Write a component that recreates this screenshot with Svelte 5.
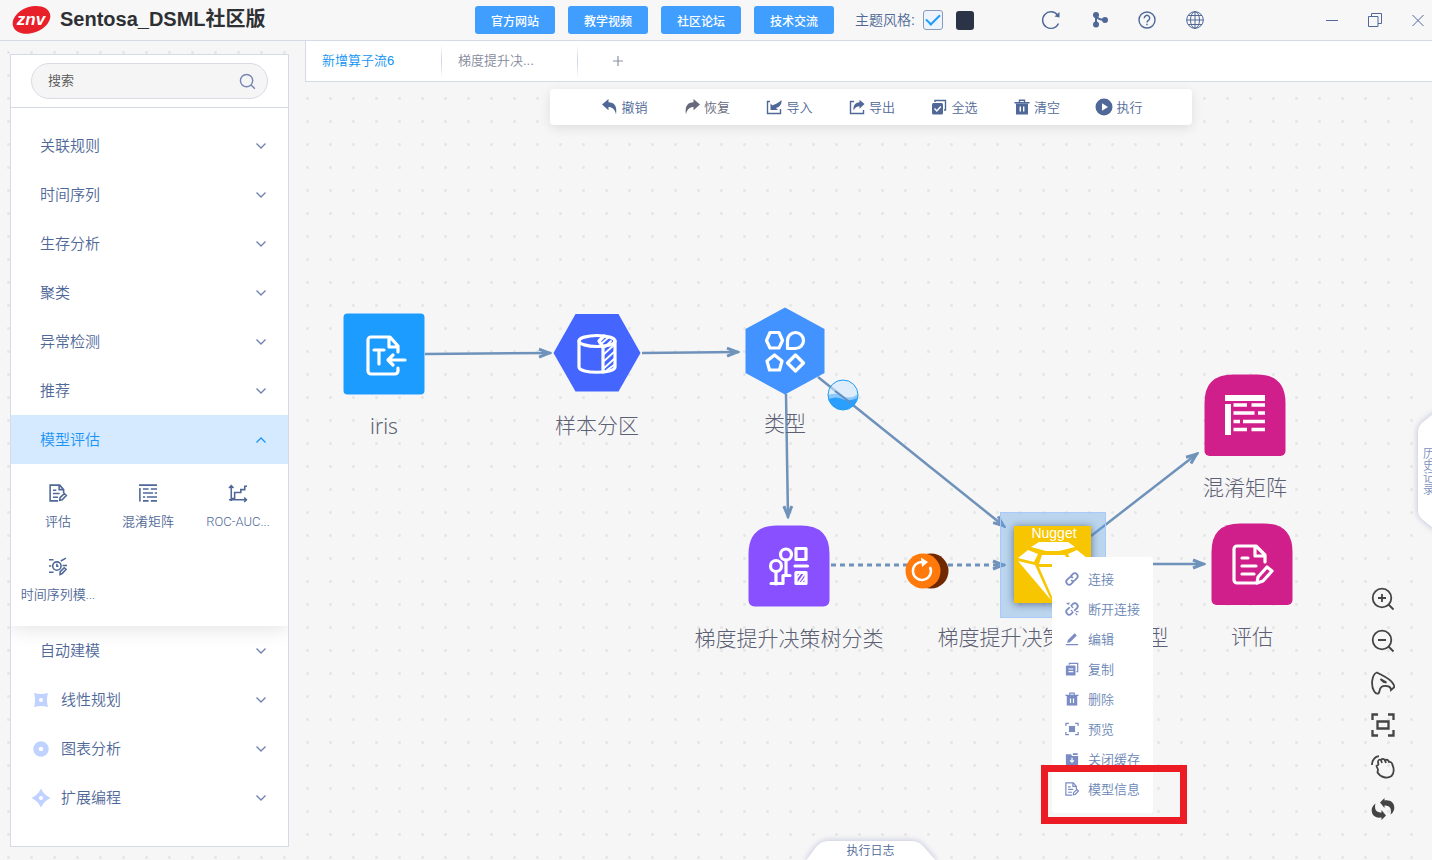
<script lang="ts">
  const links = ["官方网站", "教学视频", "社区论坛", "技术交流"];
  const tools = [
    { id: "undo", label: "撤销" },
    { id: "redo", label: "恢复" },
    { id: "import", label: "导入" },
    { id: "export", label: "导出" },
    { id: "all", label: "全选" },
    { id: "trash", label: "清空" },
    { id: "run", label: "执行" },
  ];
  const groups = [
    { label: "关联规则" },
    { label: "时间序列" },
    { label: "生存分析" },
    { label: "聚类" },
    { label: "异常检测" },
    { label: "推荐" },
    { label: "模型评估" },
    { label: "自动建模" },
    { label: "线性规划", icon: "square" },
    { label: "图表分析", icon: "ring" },
    { label: "扩展编程", icon: "star" },
  ];
  const operators = [
    { id: "doc", label: "评估" },
    { id: "matrix", label: "混淆矩阵" },
    { id: "roc", label: "ROC-AUC..." },
    { id: "time", label: "时间序列模..." },
  ];
  const menu = [
    { id: "link", label: "连接" },
    { id: "unlink", label: "断开连接" },
    { id: "edit", label: "编辑" },
    { id: "copy", label: "复制" },
    { id: "trash", label: "删除" },
    { id: "preview", label: "预览" },
    { id: "cache", label: "关闭缓存" },
    { id: "doc", label: "模型信息" },
  ];

  // x, y = centre of the tile on the canvas
  const nodes = [
    { id: "source", label: "iris", x: 79, y: 272 },
    { id: "sample", label: "样本分区", x: 292, y: 271 },
    { id: "type", label: "类型", x: 480, y: 269 },
    { id: "gbdt", label: "梯度提升决策树分类", x: 484, y: 484 },
    { id: "nugget", label: "梯度提升决策树分类模型", x: 748, y: 483 },
    { id: "matrix", label: "混淆矩阵", x: 940, y: 333 },
    { id: "eval", label: "评估", x: 947, y: 482 },
  ];
  const edges = [
    { d: "M120 272L246 271" },
    { d: "M337 271L434 270" },
    { d: "M481 312L483 436" },
    { d: "M513 295L700 445" },
    { d: "M526 483L700 483", dashed: true },
    { d: "M786 454L893 371" },
    { d: "M801 482L900 482" },
  ];

  let open = $state("模型评估");
  let light = $state(true);
</script>

{#snippet icon(id: string)}
  <svg class="ico" viewBox="0 0 16 16" aria-hidden="true">
    {#if id === "undo"}
      <path class="f" d="M0 5.500 6.500 0v3.300C12 3.300 15.500 7 14 15.500 13 10 10 8 6.500 8v3.300z" />
    {:else if id === "redo"}
      <path class="f" d="M16 5.500 9.500 0v3.300C4 3.300.5 7 2 15.500 3 10 6 8 9.500 8v3.300z" />
    {:else if id === "import"}
      <path class="s" d="M4 2.500H1.500v12h13V10M1.500 9.500V2.500" />
      <path class="f" d="M4.500 11V4.500l2 2C8 5.500 12 4.500 15.500 1c.5 4.500-2 7-5.500 8l2 2z" />
    {:else if id === "export"}
      <path class="s" d="M5 2.500H1.500v12h13V11" />
      <path class="f" d="M15.500 5 10.500.8v2.500C6 3.500 4 7 4.500 11.500 6 8.500 8 7.300 10.500 7.300v2.500z" />
    {:else if id === "all"}
      <path class="s" d="M4 3V1.500h10.500V11H13" />
      <rect class="f" x="1" y="4" width="11" height="11.500" rx="1.500" />
      <path class="cut" d="m3.500 9.500 2.300 2.500 4-4.500" />
    {:else if id === "trash"}
      <path class="s" d="M5.500 3V1.200h5V3M.5 3.800h15" />
      <path class="f" d="M2 4.500h12v11H2z" />
      <path class="cut" d="M6.300 7.500v5M9.700 7.500v5" />
    {:else if id === "run"}
      <circle class="f" cx="8" cy="8" r="8.500" />
      <path fill="#fff" d="m6 4.300 6 3.700-6 3.700z" />
    {:else if id === "doc"}
      <path class="s" d="M8 15H1V1h8.500L13 5v3M9 1.500V5h3.700M3.500 5.500h3M3.500 8.500h6M3.500 11.700h4.500" />
      <path class="s" d="m9.500 14.500.3-2.300 3.800-3.700 1.800 1.700-3.700 3.900z" />
    {:else if id === "matrix"}
      <path class="s" d="M0 1h16M.8 3.500v12M3.500 4.500h5M10.500 4.500h5.500M3.500 8h9M14 8h2M3.500 11.500h2M7 11.500h9M3.500 15h5M10.500 15h5.500" />
    {:else if id === "roc"}
      <path class="s" d="M2 15V1.500M0 3.500l2-2 2 2M0 14h15.500M13.500 12l2 2-2 2M2 13h3V7.500h5.500V5h3.500V2h2" />
    {:else if id === "time"}
      <circle class="s" cx="7" cy="8" r="3.700" />
      <path class="s" d="M7 6v2.200h1.500M0 2.500h4M0 8h2M0 13.500h4M10.500 3.500l4.500-2.500M12 7.500h4M9.800 15.500l.2-2.500 3.500-3.500 1.700 1.400-3.500 3.800z" />
    {:else if id === "link" || id === "unlink"}
      <g transform="rotate(-45 8 8)" class="s thick">
        <path d="M7 11.300H3.500a3.300 3.300 0 0 1 0-6.600H7a3 3 0 0 1 2.500 3.300" />
        <path d="M9 4.700h3.500a3.300 3.300 0 0 1 0 6.600H9A3 3 0 0 1 6.500 8" />
      </g>
      {#if id === "unlink"}
        <path stroke="#fff" stroke-width="1.500" d="m5 4 6 8" />
        <path class="s" d="M2 1l2 2M4.500.5v2M14 15l-2-2M12.500 11h3" />
      {/if}
    {:else if id === "edit"}
      <path class="f" d="m2.500 12.500.8-3.300L11 1.500l2.500 2.500-7.700 7.700zM1 13.700h14v1.500H1z" />
    {:else if id === "copy"}
      <path class="s" d="M5 3V1.500h9.500V11H13" />
      <rect class="f" x="1" y="4" width="11" height="11.500" rx="1" />
      <path class="cut" d="M4 8h5.500M4 11h5.500" />
    {:else if id === "preview"}
      <path class="s" d="M1 4.500V1.500h3.500M11.500 1.500H15v3M15 11.500v3h-3.500M4.500 14.500H1v-3" />
      <rect class="f" x="4.500" y="4.500" width="7" height="7" />
    {:else if id === "cache"}
      <path class="f" d="M1 2.500h6l1 2h7V15H1zM9 1.500h5.500v2H9z" />
      <path class="cut" d="M8 6.500v5M5.800 9.500 8 11.700l2.200-2.200" />
    {:else if id === "square"}
      <path fill="#c0d2ff" fill-rule="evenodd" d="M1 1q7 2 14 0-2 7 0 14-7-2-14 0 2-7 0-14zM8 6a2 2 0 1 0 0 4 2 2 0 0 0 0-4z" />
    {:else if id === "ring"}
      <circle cx="8" cy="8" r="5" fill="none" stroke="#c0d2ff" stroke-width="5.500" />
    {:else if id === "star"}
      <path fill="#c0d2ff" fill-rule="evenodd" d="M8-1.500q3 6.500 9.500 9.500-6.500 3-9.500 9.500-3-6.500-9.500-9.500 6.500-3 9.500-9.500zM8 6a2 2 0 1 0 0 4 2 2 0 0 0 0-4z" />
    {/if}
  </svg>
{/snippet}

{#snippet tile(id: string)}
  <svg class="tile" viewBox="-55 -55 110 110" aria-hidden="true">
    {#if id === "source"}
      <rect x="-40.500" y="-40.500" width="81" height="81" rx="4" fill="#1c9cff" />
      <g class="w">
        <path d="M14-2v-6L6-17h-19a3 3 0 0 0-3 3v31a3 3 0 0 0 3 3h24a3 3 0 0 0 3-3v-3M5-17v10h9" />
        <path d="M-10-4H0M-5-4v14M21 6H4M9 1 4 6l5 5" />
      </g>
    {:else if id === "sample"}
      <path d="M-43.500 0-21.500-39h43L43.500 0l-22 38.500h-43z" fill="#4466ff" />
      <g class="w">
        <path d="M-18-12v26c0 7 36 7 36 0v-26" />
        <ellipse cx="0" cy="-12" rx="18" ry="5.500" />
        <path d="M2-12 6-6v25M2-12l5-5" />
        <path stroke-width="1.800" d="m6 2 11-10M6 9 17-1M6 16 17 6M10 17l7-5M8-6l6-6M4-9l8-7" />
      </g>
    {:else if id === "type"}
      <path d="M0-43.500 39.500-22v44L0 43.500-39.500 22v-44z" fill="#4292ff" />
      <g class="w">
        <path d="M-15-18.500h9L-2.500-10.500-6-3h-9l-3.500-7.500z" />
        <path d="M2.500-2.500v-8a8 8 0 1 1 8 8z" />
        <path d="m-10.500 4 7.500 6-2.500 9h-10L-18 10z" />
        <path d="m10.500 4 8 8-8 8-8-8z" />
      </g>
    {:else if id === "gbdt"}
      <path d="M-40.500-12Q-40.500-40.500-12-40.500H12Q40.500-40.500 40.500-12V34.500a6 6 0 0 1-6 6h-69a6 6 0 0 1-6-6z" fill="#8850ff" />
      <g class="w">
        <circle cx="-13" cy="0" r="5.500" />
        <circle cx="-3" cy="-11.500" r="5.500" />
        <path d="M-13 6v12M-3-6V9M-18 17.500h12V9.500H1M7-17.500h10v11H7zM6 0h12.500M7 6.500h10v11H7z" />
        <path d="m9 17 7-10M8 12l4-5M12 17l4-5" stroke-width="1.500" />
      </g>
    {:else if id === "nugget"}
      <rect x="-52.500" y="-52.500" width="105" height="105" fill="#64a5e6" fill-opacity=".4" stroke="#a9c9fa" />
      <rect class="glow" x="-39" y="-39" width="77" height="77" fill="#f7c600" />
      <text x="1" y="-27" text-anchor="middle">Nugget</text>
      <path fill="#fff" d="M-14-23h29l7 5-16 4H-7l-15-4zM-25-15l10 4-4 8-16-4zM24-15l-9 4 4 8 15-4zM-11-10H12l4 9H-14zM-35-4l17 4L-2 35zM-14 2h29L0 34zM34-4 20 0 2 35z" />
    {:else}
      <path d="M-40.500-12Q-40.500-40.500-12-40.500H12Q40.500-40.500 40.500-12V36a5 5 0 0 1-5 5h-71a5 5 0 0 1-5-5z" fill="#d01f8a" />
      {#if id === "matrix"}
        <path fill="#fff" d="M-20-20h40v6h-40zM-20-11h6v31h-6z" />
        <path stroke="#fff" stroke-width="3.500" d="M-11.500-10H2M6.500-10H20M-11.500-2H9.500M13-2h7M-11.500 6.500h6.500M-2 6.500h22M-11.500 14.500H2M6.500 14.500H20" />
      {:else}
        <g class="w">
          <path d="M5 19h-20a3 3 0 0 1-3-3v-31a3 3 0 0 1 3-3H4l9 9v7M3-17v9h10M-10-6h6M-10 2H4M-10 10H2" />
          <path d="m6 13 9-10 5 4-9 10-6 2z" />
        </g>
      {/if}
    {/if}
  </svg>
{/snippet}

<div class="app">
  <header>
    <svg class="logo" viewBox="0 0 38 30" aria-hidden="true">
      <ellipse cx="19.500" cy="15" rx="19.500" ry="13" transform="rotate(-20 19 15)" fill="#e8202a" />
      <text x="19" y="20" text-anchor="middle">znv</text>
    </svg>
    <h1>Sentosa_DSML社区版</h1>
    <nav>
      {#each links as l}<button class="link">{l}</button>{/each}
    </nav>
    <div class="theme">
      <label for="light">主题风格:</label>
      <input id="light" type="checkbox" bind:checked={light} />
      <button class="dark" aria-label="深色"></button>
    </div>
    <div class="actions">
      <button aria-label="刷新">
        <svg viewBox="0 0 20 20"><path class="s" d="M17.500 13.500A8.300 8.300 0 1 1 16.500 5" /><path class="f" d="M18.500 2v5.500l-5-1z" /></svg>
      </button>
      <button aria-label="分支">
        <svg viewBox="0 0 20 20"><path class="s thick" d="M7 5v10M7 5c1 4 4 4.500 9 5" /><circle class="f" cx="7" cy="5" r="3" /><circle class="f" cx="7" cy="14.500" r="3" /><circle class="f" cx="16" cy="10" r="3" /></svg>
      </button>
      <button aria-label="帮助">
        <svg viewBox="0 0 20 20"><circle class="s" cx="10" cy="10" r="8" /><path class="s" d="M7.300 8.200a2.700 2.700 0 1 1 4.200 2.100c-1 .7-1.500 1-1.500 2.200M10 13.800v1.500" /></svg>
      </button>
      <button aria-label="语言">
        <svg viewBox="0 0 20 20"><g class="s thin"><circle cx="10" cy="10" r="8.300" /><ellipse cx="10" cy="10" rx="4.500" ry="8.300" /><path d="M10 1.500v17M1.500 10h17M3 5.500h14M3 14.500h14" /></g></svg>
      </button>
    </div>
    <div class="win">
      <button aria-label="最小化"><svg viewBox="0 0 14 14"><path class="s thin" d="M1 7.500h12" /></svg></button>
      <button aria-label="还原"><svg viewBox="0 0 14 14"><path class="s thin" d="M.5 3.500h9.500v10H.5zM3.500 3.500V.5h10v10H10" /></svg></button>
      <button aria-label="关闭"><svg viewBox="0 0 14 14"><path class="s thin" d="m1.500 2 11 11M12.500 2l-11 11" /></svg></button>
    </div>
  </header>

  <div class="body">
    <aside>
      <div class="search">
        <input type="text" placeholder="搜索" aria-label="搜索" />
        <svg viewBox="0 0 18 18" aria-hidden="true"><circle cx="8" cy="8" r="6.500" /><path d="m12.800 12.800 4 4" /></svg>
      </div>
      <div class="groups">
        {#each groups as g}
          <button
            class="group"
            class:open={open === g.label}
            class:top={g.icon}
            onclick={() => (open = g.label)}
          >
            {#if g.icon}{@render icon(g.icon)}{/if}
            <span>{g.label}</span>
            <svg class="chev" viewBox="0 0 10 6" aria-hidden="true"><path d="m.5.5 4.500 4.500L9.500.5" /></svg>
          </button>
          {#if open === g.label}
            <div class="ops">
              {#each operators as o}
                <button class="op">{@render icon(o.id)}<span>{o.label}</span></button>
              {/each}
            </div>
          {/if}
        {/each}
      </div>
    </aside>

    <main>
      <div class="tabs">
        <button class="tab on">新增算子流6</button>
        <button class="tab">梯度提升决...</button>
        <button class="add" aria-label="新增"><svg viewBox="0 0 12 12"><path d="M6 1v10M1 6h10" /></svg></button>
      </div>

      <div class="canvas">
        <svg class="edges" aria-hidden="true">
          <defs>
            <marker id="tip" viewBox="0 0 14 12" markerWidth="14" markerHeight="12" markerUnits="userSpaceOnUse" refX="13" refY="6" orient="auto">
              <path d="M1 2 11 6 1 10" />
            </marker>
          </defs>
          {#each edges as e}
            <path class="edge" class:dashed={e.dashed} d={e.d} marker-end="url(#tip)" />
          {/each}
          <g class="water">
            <circle cx="538" cy="313" r="15" fill="#cfe8fb" fill-opacity=".6" />
            <path d="M523 313q8-3 15 1t15-2a15 15 0 0 1-30 1z" fill="#8cc8fa" />
            <path d="M523.500 317q8-3 14 0t15-1a15 15 0 0 1-29 1z" fill="#2a9fff" />
            <path d="m530 309 16 12" stroke="#5f8fc0" stroke-width="2" />
            <circle cx="538" cy="313" r="15" fill="none" stroke="#1c9cf2" />
          </g>
          <circle cx="626" cy="489" r="17.500" fill="#702800" />
          <circle cx="618" cy="489" r="17.500" fill="#ff7a0a" />
          <path class="reload" d="M625 485a9 9 0 1 1-7-5" />
          <path d="m616 475.500 7 4.500-6 5z" fill="#fff" />
        </svg>

        {#each nodes as n}
          <div class="node" style:left="{n.x}px" style:top="{n.y}px">
            {@render tile(n.id)}
            <span>{n.label}</span>
          </div>
        {/each}

        <div class="toolbar">
          {#each tools as t}
            <button class="tool" class:dim={t.id === "redo"}>{@render icon(t.id)}<span>{t.label}</span></button>
          {/each}
        </div>

        <div class="menu">
          {#each menu as m}
            <button>{@render icon(m.id)}<span>{m.label}</span></button>
          {/each}
        </div>
        <div class="mark"></div>

        <div class="zoom">
          <button aria-label="放大"><svg viewBox="0 0 24 24"><circle cx="11" cy="11" r="9.300" /><path d="m17.500 17.500 5 5M7 11h8M11 7v8" /></svg></button>
          <button aria-label="缩小"><svg viewBox="0 0 24 24"><circle cx="11" cy="11" r="9.300" /><path d="m17.500 17.500 5 5M7 11h8" /></svg></button>
          <button aria-label="选择"><svg viewBox="0 0 24 24"><path d="M6 1.500C1 3-.5 14 3 20c2 3.500 5 3.500 5.500 0 .5-4 3-5.500 7-5 3 .3 4.500 1.500 4.500 4l3-2.500c.5-1 .3-2-1-4C18.500 7 11 4.500 6 1.500zM9.500 8l6 3.500-3-.5z" /></svg></button>
          <button aria-label="适应"><svg viewBox="0 0 24 24"><path class="bold" d="M1.500 7V1.500H7M17 1.500h5.500V7M22.500 17v5.500H17M7 22.500H1.500V17M6.500 8.500h11v7h-11z" /></svg></button>
          <button aria-label="拖动"><svg viewBox="0 0 24 24"><path d="M1 10C1 5 4 1.500 8 1.200M7.500 9.500 5.500 11l1.500 3.500-.5 3c3 5 10 6.500 14 3.500 3-3 2.500-8 1-11-.5-2.500-2-3.500-3.500-3-.5-2-2.500-3-4-1.500-1-2-3-2-4-.5-1.500-1-3 0-3 2l.5 3M10 5l1 3M14 5.500l1 2.500" /></svg></button>
          <button aria-label="重置"><svg viewBox="0 0 24 24"><path class="solid" d="m9 5.500 4.500-4.500v2.500C20 2.500 24.500 6.500 23 13q-1 3-3.500 4.500C21 12 19 8.500 13.500 8.500V11zM15 18.500 10.500 23v-2.500C4 21.500-.5 17.500 1 11q1-3 3.500-4.500C3 12 5 15.500 10.500 15.500V13z" /></svg></button>
        </div>

        <button class="history">
          <svg viewBox="0 0 24 130" aria-hidden="true"><path d="M26 2 11 14Q6 18 6 25V102Q6 108 11 112L26 124z" /></svg>
          <span>历史记录</span>
        </button>
        <button class="log">
          <svg viewBox="0 0 136 24" aria-hidden="true"><path d="M2 26 13 11Q18 5 25 5H109Q116 5 121 11L134 26z" /></svg>
          <span>执行日志</span>
        </button>
      </div>
    </main>
  </div>
</div>

<style>
:global(body){margin:0;background:#f5f5f5}
.app{
  min-height:100vh;
  display:flex;flex-direction:column;
  font-family:"Liberation Sans","Noto Sans CJK SC",sans-serif;
  font-weight:350;
  color:#4f6898;
  background-color:#f6f6f6;
  background-image:radial-gradient(circle,#e6e6e6 1px,transparent 2px);
  background-size:23px 23px;
  background-position:20px 18px;
}
button{
  border:0;padding:0;background:none;
  font:inherit;color:inherit;cursor:pointer;
  display:flex;align-items:center;
}
svg{display:block;flex:none}
.ico{width:16px;height:16px;overflow:visible}
.f{fill:currentColor}
.s{fill:none;stroke:currentColor;stroke-width:1.400}
.thick{stroke-width:2}
.thin{stroke-width:1}
.cut{fill:none;stroke:#fff;stroke-width:1.400}

header{
  height:40px;padding:0 7px 0 12px;
  display:flex;align-items:center;
  background:#f7f7f7;border-bottom:1px solid #d6d9e6;
}
.logo{width:38px;height:30px;overflow:visible}
.logo text{font:italic 700 17px "Liberation Sans",sans-serif;fill:#fff}
h1{
  margin:0 auto 0 10px;padding-bottom:2px;
  font:700 20px/28px "Liberation Sans","Noto Sans CJK SC",sans-serif;
  color:#2e3033;white-space:nowrap;
}
nav{display:flex;gap:13px}
.link{
  width:80px;height:28px;justify-content:center;
  border-radius:3px;background:#409eff;
  color:#fff;font-size:12px;font-weight:500;
}
.theme{display:flex;align-items:center;margin-left:21px;font-size:14px}
.theme label{padding-bottom:2px}
.theme input{
  appearance:none;box-sizing:border-box;
  width:20px;height:20px;margin:0 13px 0 8px;
  border:1px solid #8b9ab8;border-radius:3px;background:#eef4fd;
  display:grid;place-items:center;
}
.theme input:checked::before{
  content:"";width:12px;height:6px;margin-bottom:4px;
  border-left:2px solid #1c9cff;border-bottom:2px solid #1c9cff;
  transform:rotate(-45deg);
}
.dark{width:18px;height:19px;border-radius:3px;background:#2b3347}
.actions{display:flex;gap:28px;margin-left:67px}
.actions svg{width:20px;height:20px}
.win{display:flex;gap:29px;margin-left:120px}
.win svg{width:14px;height:14px}

.body{flex:1;display:flex}
aside{
  box-sizing:border-box;width:279px;flex:none;
  margin:13px 16px 13px 10px;
  border:1px solid #d6d9e6;background:#fff;
}
.search{
  display:flex;align-items:center;
  height:34px;margin:8px 20px;padding:0 11px 0 16px;
  border:1px solid #d9dae6;border-radius:18px;background:#f5f5f5;
}
.search input{
  flex:1;min-width:0;border:0;padding:0 0 2px;outline:0;background:none;
  font:inherit;font-size:13px;color:#555;
}
.search input::placeholder{color:#555;opacity:1}
.search svg{width:17px;height:17px;fill:none;stroke:#7686b5;stroke-width:1.500}
.groups{padding:13px 0 24px;border-top:1px solid #d6d9e6}
.group{
  width:100%;height:49px;padding:0 22px 0 29px;
  font-size:15px;
}
.group span,.tool span,.menu span{padding-bottom:2px}
.group.top{padding-left:22px;gap:12px}
.chev{width:10px;height:6px;margin-left:auto;fill:none;stroke:#6d80b0;stroke-width:1.300}
.group.open{background:#d6eaff;color:#1c94f7}
.open .chev{transform:rotate(180deg);stroke:#1c94f7}
.ops{
  display:grid;grid-template-columns:repeat(3,1fr);align-content:start;
  row-gap:15px;
  padding:20px 5px 11px 2px;
  box-shadow:0 2px 20px rgba(0,0,0,.12);
  clip-path:inset(0 0 -24px 0);
}
.op{flex-direction:column;height:58px;gap:10px;font-size:13px;line-height:20px;white-space:nowrap}
.op .ico{width:18px;height:18px}
.op span{font-family:Roboto,"Noto Sans CJK SC",sans-serif}

main{flex:1;min-width:0;display:flex;flex-direction:column}
.tabs{
  display:flex;height:40px;
  background:#fff;border:solid #d6d9e6;border-width:0 0 1px 1px;
}
.tab{
  box-sizing:border-box;
  width:136px;padding:0 0 4px 16px;font-size:13px;color:#868b9c;
  border-right:1px solid;
  border-image:linear-gradient(transparent 10%,#ccd3e3 50%,transparent 90%) 1;
}
.tab.on{color:#0d92f4}
.add{width:80px;justify-content:center}
.add svg{width:12px;height:12px;stroke:#8a93a3;stroke-width:1.200}

.canvas{flex:1;position:relative;overflow:hidden}
.toolbar{
  position:relative;box-sizing:border-box;
  width:642px;height:36px;margin:7px auto 0;padding:0 49px 0 52px;
  display:flex;justify-content:space-between;
  left:2px;
  border-radius:4px;background:#fff;
  box-shadow:0 3px 12px rgba(0,0,0,.1);
}
.tool{gap:4px;font-size:13px}
.tool.dim{color:#666a7c}
.edges{position:absolute;inset:0;width:100%;height:100%}
.edge{fill:none;stroke:#6f92ba;stroke-width:2.500}
.edge.dashed{stroke-dasharray:5 4;stroke-width:3}
marker path{fill:none;stroke:#6f92ba;stroke-width:3}
.reload{fill:none;stroke:#fff;stroke-width:2.500}
.node{
  position:absolute;width:260px;margin:-55px 0 0 -130px;
  display:flex;flex-direction:column;align-items:center;gap:2px;
  font:300 21px/30px "Noto Sans","Noto Sans CJK SC",sans-serif;
  color:#5c6074;white-space:nowrap;
}
.tile{width:110px;height:110px}
.tile text{font:500 14px "Liberation Sans",sans-serif;fill:#fff}
.w{fill:none;stroke:#fff;stroke-width:3.200;stroke-linejoin:round;stroke-linecap:round}
.glow{filter:drop-shadow(0 1px 4px rgba(60,70,90,.7))}

.menu{
  position:absolute;left:747px;top:475px;
  box-sizing:border-box;width:101px;padding:7px 0 9px 13px;
  border-radius:4px;background:#fff;
}
.menu button{height:30px;gap:9px;font-size:13px;color:#6a86b5;white-space:nowrap}
.menu .ico{width:14px;height:14px;color:#7b8cc4}
.mark{
  position:absolute;left:736px;top:683px;
  box-sizing:border-box;width:146px;height:59px;
  border:7px solid #ed1c24;
}
.zoom{position:absolute;right:37px;top:505px;display:grid;gap:18px}
.zoom svg{width:24px;height:24px;fill:none;stroke:#444;stroke-width:1.800}
.zoom .bold{stroke-width:2.300}
.zoom .solid{fill:#444;stroke:none}
.history{
  position:absolute;right:-4px;top:326px;
  width:24px;height:130px;
}
.history svg,.log svg{position:absolute;inset:0;width:100%;height:100%;overflow:visible;fill:#fff;filter:drop-shadow(0 0 3px rgba(110,120,180,.45))}
.history span{position:relative;width:12px;margin-left:11px;padding-bottom:2px;font-size:12px;line-height:12px;color:#7c90bd;word-break:break-all}
.log{
  position:absolute;bottom:0;left:50%;
  width:136px;height:24px;margin-left:-66px;
  justify-content:center;
}
.log span{position:relative;padding-top:6px;font-size:12px;line-height:18px}
</style>
